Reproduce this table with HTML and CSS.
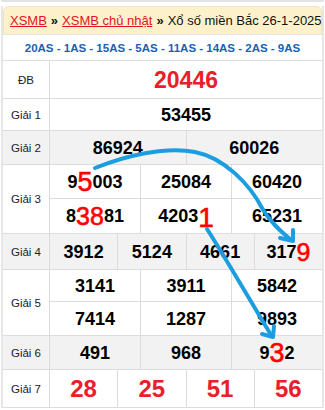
FILE: index.html
```html
<!DOCTYPE html>
<html lang="vi">
<head>
<meta charset="utf-8">
<title>XSMB 26-1-2025</title>
<link rel="stylesheet" href="styles.css">
</head>
<body>
<div class="prev"></div>
<div class="page">
  <div class="head">
    <a class="lnk" href="#">XSMB</a><span class="sep">»</span><a class="lnk" href="#">XSMB chủ nhật</a><span class="sep">»</span><span class="title">Xổ số miền Bắc 26-1-2025</span>
  </div>
  <div class="codes">20AS - 1AS - 15AS - 5AS - 11AS - 14AS - 2AS - 9AS</div>
  <div class="grid">
    <div class="lbl">ĐB</div>
    <div class="c s12 db">20446</div>

    <div class="lbl">Giải 1</div>
    <div class="c s12">53455</div>

    <div class="lbl alt">Giải 2</div>
    <div class="c s6 alt">86924</div>
    <div class="c s6 alt">60026</div>

    <div class="lbl r2">Giải 3</div>
    <div class="c s4">9<span class="big b5">5</span>003</div>
    <div class="c s4">25084</div>
    <div class="c s4">60420</div>
    <div class="c s4">8<span class="big b38">38</span>81</div>
    <div class="c s4">4203<span class="big b1">1</span></div>
    <div class="c s4">65231</div>

    <div class="lbl alt">Giải 4</div>
    <div class="c s3 alt">3912</div>
    <div class="c s3 alt">5124</div>
    <div class="c s3 alt">4661</div>
    <div class="c s3 alt">317<span class="big b9">9</span></div>

    <div class="lbl r2">Giải 5</div>
    <div class="c s4">3141</div>
    <div class="c s4">3911</div>
    <div class="c s4">5842</div>
    <div class="c s4">7414</div>
    <div class="c s4">1287</div>
    <div class="c s4">9893</div>

    <div class="lbl alt">Giải 6</div>
    <div class="c s4 alt">491</div>
    <div class="c s4 alt">968</div>
    <div class="c s4 alt">9<span class="big b3">3</span>2</div>

    <div class="lbl">Giải 7</div>
    <div class="c s3 g7">28</div>
    <div class="c s3 g7">25</div>
    <div class="c s3 g7">51</div>
    <div class="c s3 g7">56</div>
  </div>
</div>
<svg class="arrows" width="325" height="410" viewBox="0 0 325 410" xmlns="http://www.w3.org/2000/svg">
  <g fill="none" stroke="#1c9de0" stroke-width="4" stroke-linecap="round" stroke-linejoin="round">
    <path d="M95 168 C125 156 165 146 195 152 C225 158 250 185 262 208 C272 225 283 233 291 240"/>
    <path d="M280 238 L293 241 L293 230"/>
    <path d="M207 229 C222 252 245 292 271 335"/>
    <path d="M262 334 L273 337 L274 326"/>
  </g>
</svg>
</body>
</html>
```
FILE: styles.css
```css
* { box-sizing: border-box; }
body {
  margin: 0;
  width: 325px;
  height: 410px;
  overflow: hidden;
  position: relative;
  background: #fff;
  font-family: "Liberation Sans", Arial, sans-serif;
  color: #000;
}
.prev {
  height: 2px;
  margin: 0 1px;
  border: 2px solid #e3e3e3;
  border-top: 0;
  border-radius: 0 0 5px 5px;
}
.page {
  margin: 4px 1px 0;
  border-left: 2px solid #e6e6e6;
  border-right: 2px solid #e6e6e6;
}
.head {
  height: 29px;
  display: flex;
  align-items: center;
  padding: 0 0 0 6px;
  background: #fdf1cb;
  border: 1px solid #efe4bd;
  border-bottom: 1px solid #e6e6e6;
  border-radius: 6px 6px 0 0;
  font-size: 13px;
  white-space: nowrap;
  color: #111;
}
.lnk { color: #e3141e; text-decoration: underline; }
.sep { padding: 0 4px; font-weight: bold; }
.codes {
  height: 26px;
  display: flex;
  align-items: center;
  justify-content: center;
  border-bottom: 1px solid #dcdcdc;
  font-size: 11.5px;
  font-weight: bold;
  color: #1a5fb4;
  white-space: nowrap;
}
.grid {
  display: grid;
  grid-template-columns: 46px repeat(12, minmax(0, 1fr));
  grid-template-rows: 37px 31px 33px 33px 34px 35px 31px 33px 33px 37px;
  gap: 1px;
  background: #dcdcdc;
  border-bottom: 1px solid #dcdcdc;
}
.lbl {
  display: flex;
  align-items: center;
  justify-content: center;
  background: #fff;
  font-size: 11.5px;
  color: #222;
}
.c {
  display: flex;
  align-items: center;
  justify-content: center;
  background: #fff;
  font-size: 18px;
  font-weight: bold;
  line-height: 20px;
  white-space: nowrap;
}
.alt { background: #f2f2f2; }
.r2 { grid-row: span 2; }
.s12 { grid-column: span 12; }
.s6 { grid-column: span 6; }
.s4 { grid-column: span 4; }
.s3 { grid-column: span 3; }
.db { font-size: 23px; color: #e8202a; }
.g7 { font-size: 24px; color: #e8202a; }
.big {
  font-weight: normal;
  color: #ff0000;
  line-height: 0;
  font-size: 25px;
  -webkit-text-stroke: 0.6px #ff0000;
}
.b5 { font-size: 27px; }
.b38 { font-size: 25px; }
.b1 { font-size: 28px; position: relative; top: 2px; }
.b9 { font-size: 25px; }
.b3 { font-size: 27px; }
.arrows {
  position: absolute;
  left: 0;
  top: 0;
  pointer-events: none;
}
```
